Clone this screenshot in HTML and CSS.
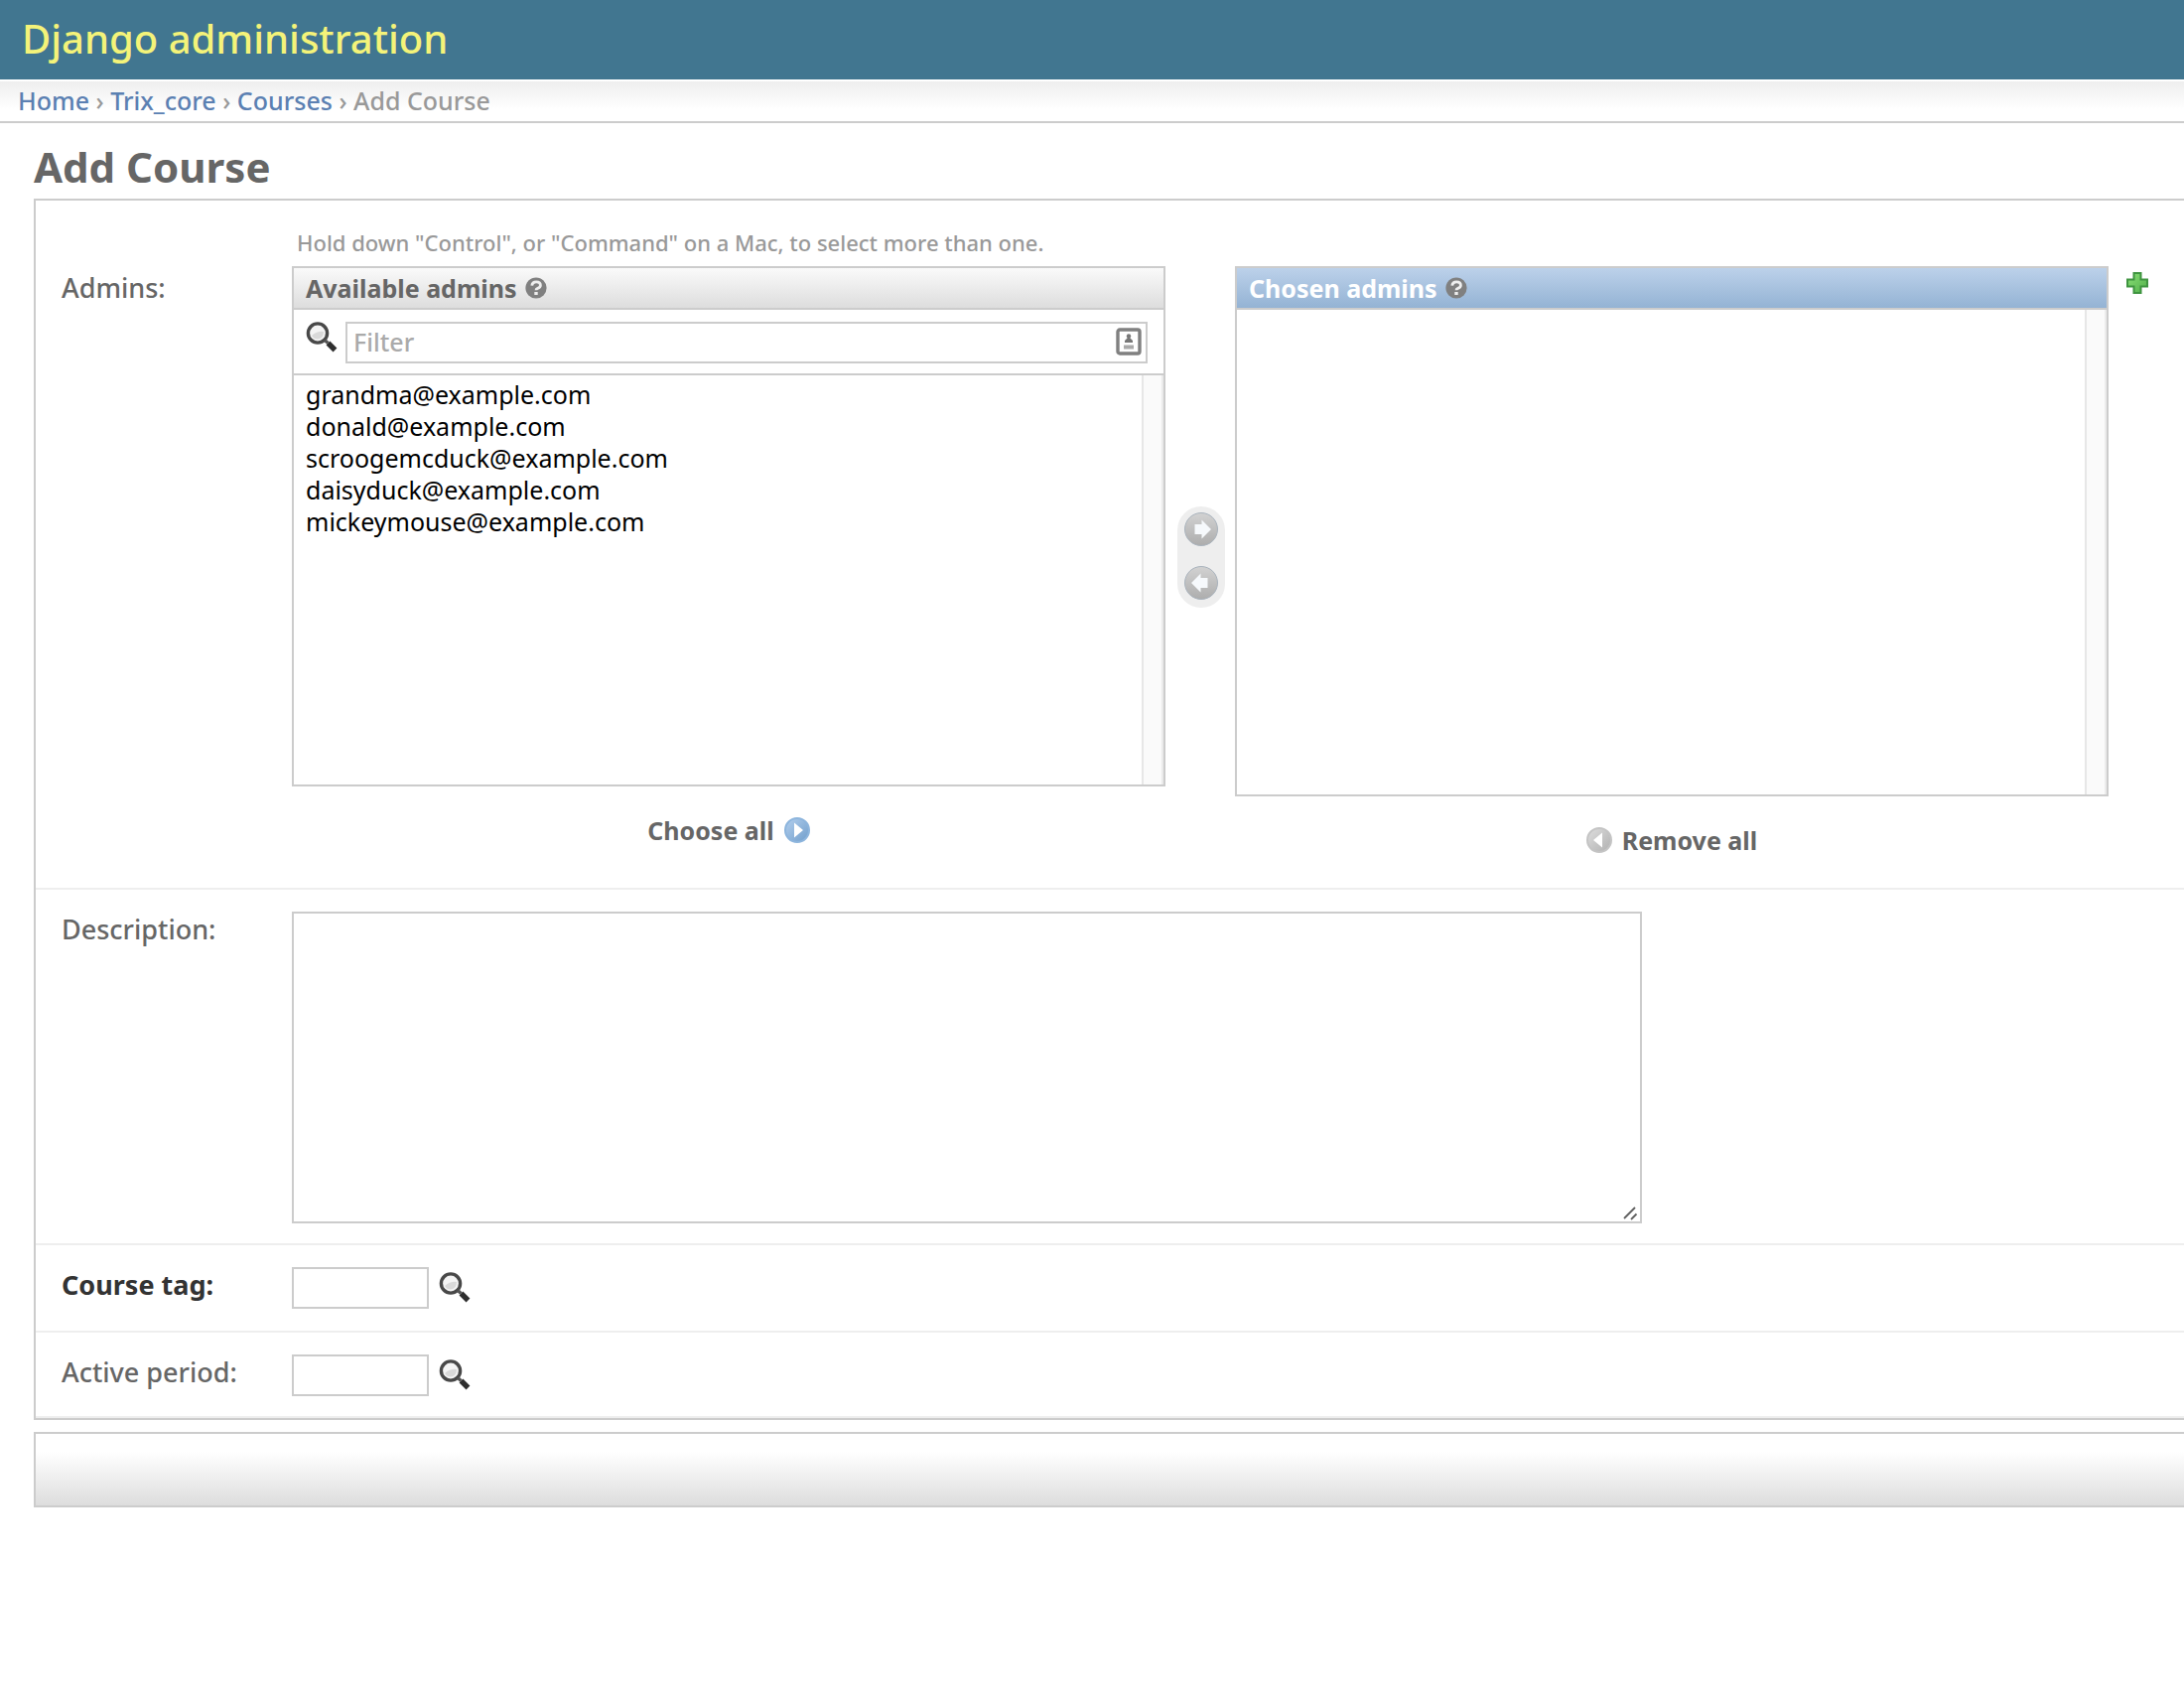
FILE: index.html
```
<!DOCTYPE html>
<html lang="en">

<head>
    <meta charset="UTF-8">
    <meta name="viewport" content="width=device-width, initial-scale=1.0">
    <title>Add Course | Django administration</title>
    <link rel="stylesheet" href="styles.css">
</head>

<body>

    <!-- Shared icons -->
    <svg class="sprite" aria-hidden="true">
        <defs>
            <linearGradient id="grey-ball" x1="0" y1="0" x2="0" y2="1">
                <stop offset="0" stop-color="#d2d2d2" />
                <stop offset="1" stop-color="#adadad" />
            </linearGradient>
            <linearGradient id="blue-ball" x1="0" y1="0" x2="1" y2="1">
                <stop offset="0" stop-color="#b4d0ee" />
                <stop offset="1" stop-color="#6f9dcb" />
            </linearGradient>
            <linearGradient id="pale-ball" x1="0" y1="0" x2="1" y2="1">
                <stop offset="0" stop-color="#dedede" />
                <stop offset="1" stop-color="#b0b0b0" />
            </linearGradient>
            <linearGradient id="green-plus" x1="0" y1="0" x2="1" y2="1">
                <stop offset="0" stop-color="#8ce078" />
                <stop offset="1" stop-color="#4fae48" />
            </linearGradient>
        </defs>
        <symbol id="icon-search" viewBox="0 0 32 32">
            <circle cx="12" cy="11.5" r="9.6" fill="#f4f4f4" stroke="#484848" stroke-width="3.4" />
            <path d="M6 14 Q12 9 18 10 Q18 17 12 17.500 Q8 17.500 6 14Z" fill="#d9d9d9" />
            <path d="M19 18.500 L22.500 21.500" stroke="#555" stroke-width="3.4" />
            <path d="M22.500 21.500 L29.500 28.500" stroke="#2e2e2e" stroke-width="5.4" />
        </symbol>
        <symbol id="icon-help" viewBox="0 0 22 22">
            <circle cx="11" cy="11" r="10.6" fill="#808080" />
            <path d="M6.800 8.600 Q7.200 4.800 11.200 4.800 Q15.400 4.800 15.400 8.300 Q15.400 10.600 12.600 11.300 Q11 11.800 11 13.300" fill="none" stroke="currentColor" stroke-width="2.800" />
            <rect x="9.300" y="15" width="3.400" height="3" fill="currentColor" />
        </symbol>
    </svg>

    <div class="header">
        <div class="site-name">Django administration</div>
    </div>

    <div class="breadcrumbs">
        <a href="#">Home</a> &rsaquo;
        <a href="#">Trix_core</a> &rsaquo;
        <a href="#">Courses</a> &rsaquo;
        Add Course
    </div>

    <div class="content">
        <h1>Add Course</h1>
        <form>
            <div class="module">
                <div class="form-row row-admins">
                    <p class="help">Hold down "Control", or "Command" on a Mac, to select more than one.</p>
                    <label for="admins-from">Admins:</label>
                    <div class="selector">
                        <div class="selector-box">
                            <div class="panel panel-available">
                                <h2>Available admins <svg class="icon-help"><use href="#icon-help" /></svg></h2>
                                <div class="filter">
                                    <label for="admins-filter" aria-label="Filter"><svg class="icon-search"><use href="#icon-search" /></svg></label>
                                    <input type="text" id="admins-filter" placeholder="Filter">
                                    <svg class="icon-card" viewBox="0 0 26 28">
                                        <rect x="2" y="2" width="22" height="24" rx="2" fill="#fff" stroke="#808080" stroke-width="3.4" />
                                        <circle cx="13" cy="8.500" r="2.200" fill="#777" />
                                        <path d="M9 15 V13 L12 10 H14 L17 13 V15Z" fill="#777" />
                                        <rect x="8" y="17.500" width="10" height="4" fill="#aaa" />
                                    </svg>
                                </div>
                                <select id="admins-from" multiple>
                                    <option>grandma@example.com</option>
                                    <option>donald@example.com</option>
                                    <option>scroogemcduck@example.com</option>
                                    <option>daisyduck@example.com</option>
                                    <option>mickeymouse@example.com</option>
                                </select>
                            </div>
                            <a class="select-all" href="#">Choose all
                                <svg class="icon-ball" viewBox="0 0 26 26">
                                    <circle cx="13" cy="13" r="12" fill="url(#blue-ball)" stroke="#8db5dd" stroke-width="2" />
                                    <path d="M10 5.500 L19 13 L10 20.500Z" fill="#fff" />
                                </svg>
                            </a>
                        </div>

                        <div class="chooser">
                            <button type="button" aria-label="Choose">
                                <svg viewBox="0 0 34 34">
                                    <circle cx="17" cy="17" r="16.5" fill="url(#grey-ball)" stroke="#a9b3bd" />
                                    <path d="M10.500 12 H17.500 V7.500 L27 17 L17.500 26.500 V22 H10.500Z" fill="#f6f9fc" />
                                </svg>
                            </button>
                            <button type="button" aria-label="Remove">
                                <svg viewBox="0 0 34 34">
                                    <circle cx="17" cy="17" r="16.5" fill="url(#grey-ball)" stroke="#a9b3bd" />
                                    <path d="M23.500 12 H16.500 V7.500 L7 17 L16.500 26.500 V22 H23.500Z" fill="#f6f9fc" />
                                </svg>
                            </button>
                        </div>

                        <div class="selector-box">
                            <div class="panel panel-chosen">
                                <h2>Chosen admins <svg class="icon-help"><use href="#icon-help" /></svg></h2>
                                <select id="admins-to" multiple aria-label="Chosen admins"></select>
                            </div>
                            <a class="select-all" href="#">
                                <svg class="icon-ball" viewBox="0 0 26 26">
                                    <circle cx="13" cy="13" r="12" fill="url(#pale-ball)" stroke="#c4c4c4" stroke-width="2" />
                                    <path d="M16 5.500 L7 13 L16 20.500Z" fill="#fff" />
                                </svg>
                                Remove all
                            </a>
                        </div>

                        <a class="add-another" href="#" aria-label="Add another">
                            <svg viewBox="0 0 22 22">
                                <path d="M7.500 1 H14.500 V7.500 H21 V14.500 H14.500 V21 H7.500 V14.500 H1 V7.500 H7.500Z" fill="url(#green-plus)" stroke="#3f9440" stroke-width="2" />
                            </svg>
                        </a>
                    </div>
                </div>

                <div class="form-row">
                    <label for="description">Description:</label>
                    <div class="text-area">
                        <textarea id="description"></textarea>
                        <svg class="grip" viewBox="0 0 16 16">
                            <path d="M2 13 L13 2 M9 14 L14.500 8.500" stroke="#5f5f5f" stroke-width="1.800" />
                        </svg>
                    </div>
                </div>

                <div class="form-row">
                    <label class="required" for="course-tag">Course tag:</label>
                    <div class="lookup">
                        <input type="text" id="course-tag">
                        <a href="#" aria-label="Lookup"><svg class="icon-search"><use href="#icon-search" /></svg></a>
                    </div>
                </div>

                <div class="form-row">
                    <label for="active-period">Active period:</label>
                    <div class="lookup">
                        <input type="text" id="active-period">
                        <a href="#" aria-label="Lookup"><svg class="icon-search"><use href="#icon-search" /></svg></a>
                    </div>
                </div>
            </div>

            <div class="submit-row"></div>
        </form>
    </div>

</body>

</html>
```
FILE: styles.css
```
* {
    box-sizing: border-box;
    margin: 0;
    padding: 0;
}

body {
    background-color: #fff;
    color: #333;
    font-family: "Noto Sans", "Lucida Grande", sans-serif;
    font-size: 25px;
    font-weight: 500;
}

a {
    color: #5b80b2;
    text-decoration: none;
}

svg {
    display: block;
}

.sprite {
    position: absolute;
    width: 0;
    height: 0;
}

/* Header */
.header {
    height: 80px;
    padding: 0 22px;
    background-color: #417690;
    color: #f4f379;
}

.site-name {
    font-size: 40px;
    line-height: 78px;
}

.breadcrumbs {
    padding: 4px 18px 6px;
    border-top: 2px solid #fff;
    border-bottom: 2px solid #ccc;
    background: linear-gradient(#eee, #fff 28px);
    color: #999;
    line-height: 30px;
}

/* Content */
.content {
    padding: 20px 0 40px 34px;
}

h1 {
    margin-bottom: 8px;
    color: #666;
    font-size: 42px;
    line-height: 48px;
}

.module {
    border: 2px solid #ccc;
    border-right: 0;
}

.form-row {
    display: grid;
    grid-template-columns: 232px 1fr;
    align-items: start;
    padding: 22px 0 20px 26px;
    border-bottom: 2px solid #eee;
}

.form-row > label {
    color: #666;
    font-size: 27px;
    line-height: 36px;
}

.form-row > label.required {
    padding-bottom: 8px;
    color: #333;
    font-weight: bold;
}

.row-admins > label {
    padding-top: 4px;
}

.help {
    grid-column: 2;
    padding: 0 0 4px 5px;
    color: #999;
    font-size: 22px;
    line-height: 40px;
}

input,
textarea,
select {
    border: 2px solid #ccc;
    border-radius: 0;
    outline: none;
    background-color: #fff;
    font: inherit;
}

input {
    height: 42px;
    padding: 0 6px 2px;
}

input::placeholder {
    color: #aaa;
}

/* Two-list selector */
.selector {
    display: flex;
    align-items: flex-start;
}

.selector-box {
    flex: 0 1 880px;
    padding-bottom: 12px;
}

.panel {
    border: 2px solid #ccc;
}

.panel h2 {
    display: flex;
    align-items: center;
    gap: 8px;
    height: 42px;
    padding-left: 12px;
    border-bottom: 2px solid #ccc;
    background: linear-gradient(#fafafa, #ddd);
    color: #666;
    font-size: 25px;
    line-height: 38px;
}

.panel-chosen h2 {
    background: linear-gradient(#bcd1ea, #94b3d4);
    color: #fff;
}

.icon-help {
    width: 22px;
    height: 22px;
    color: #eee;
}

.filter {
    position: relative;
    display: flex;
    align-items: flex-start;
    gap: 8px;
    padding: 12px 16px 10px 12px;
    border-bottom: 2px solid #ccc;
}

.filter input {
    flex: 1;
}

.icon-card {
    position: absolute;
    top: 18px;
    right: 22px;
    width: 26px;
    height: 28px;
}

.icon-search {
    width: 32px;
    height: 32px;
}

select[multiple] {
    display: block;
    width: 100%;
    height: 412px;
    padding: 2px 0;
    border: 0;
    background: linear-gradient(to right, #e7e7e7 2px, #fafafa 2px, #fafafa 20px, #ebebeb 20px) right / 22px 100% no-repeat #fff;
    scrollbar-width: none;
}

.panel-chosen select[multiple] {
    height: 488px;
}

option {
    height: 32px;
    padding: 0 12px;
    color: #000;
    line-height: 32px;
}

.select-all {
    display: flex;
    justify-content: center;
    align-items: center;
    gap: 10px;
    padding-top: 28px;
    color: #666;
    font-weight: bold;
    line-height: 32px;
}

.icon-ball {
    width: 26px;
    height: 26px;
}

.chooser {
    display: flex;
    flex-direction: column;
    align-items: center;
    gap: 20px;
    width: 48px;
    margin: 242px 10px 0 12px;
    padding: 6px 0 8px;
    border-radius: 24px;
    background-color: #eee;
}

.chooser button {
    width: 34px;
    height: 34px;
    border: 0;
    background: none;
    cursor: pointer;
}

.add-another {
    width: 22px;
    margin: 6px 0 0 18px;
}

/* Plain fields */
.text-area {
    position: relative;
    width: 1360px;
    max-width: 100%;
}

textarea {
    display: block;
    width: 100%;
    height: 314px;
    resize: none;
}

.grip {
    position: absolute;
    right: 4px;
    bottom: 2px;
    width: 16px;
    height: 16px;
}

.lookup {
    display: flex;
    align-items: center;
    gap: 10px;
}

.lookup input {
    width: 138px;
}

.submit-row {
    height: 76px;
    margin-top: 12px;
    border: 2px solid #ccc;
    border-right: 0;
    background: linear-gradient(#fff 25%, #ddd);
}
```
